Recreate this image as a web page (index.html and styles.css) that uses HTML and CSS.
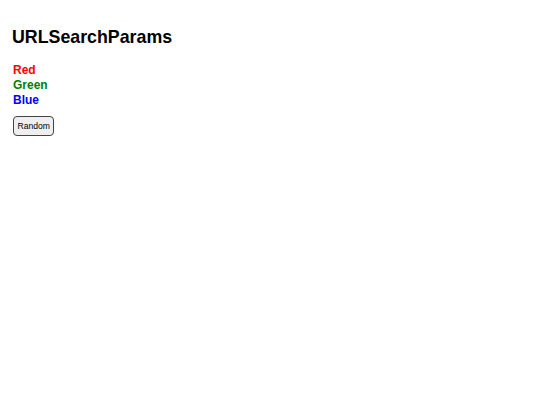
FILE: index.html
```html
<!DOCTYPE html>
<html>
<head>
<link rel="stylesheet" href="styles.css">
</head>
<body>
<div class="app">
  <h2 class="title">URLSearchParams</h2>
  <div class="colors">
    <div class="color red">Red</div>
    <div class="color green">Green</div>
    <div class="color blue">Blue</div>
  </div>
  <button class="btn">Random</button>
</div>
</body>
</html>
```
FILE: styles.css
```css
body {
  margin: 0;
  font-family: "Liberation Sans", Arial, sans-serif;
  background: #fff;
}
.app {
  padding: 12px 12px;
  display: flex;
  flex-direction: column;
  align-items: flex-start;
}
.title {
  font-size: 17.8px;
  font-weight: bold;
  margin: 15px 0 15px 0;
  color: #000;
}
.colors {
  display: flex;
  flex-direction: column;
  margin-left: 1px;
}
.color {
  font-size: 12px;
  font-weight: bold;
  line-height: 15px;
}
.red { color: #ff0000; }
.green { color: #008000; }
.blue { color: #0000ff; }
.btn {
  margin: 8px 0 0 1px;
  font-family: "Liberation Sans", Arial, sans-serif;
  font-size: 8.6px;
  line-height: 10px;
  padding: 4px 3.5px;
  border: 1px solid #444;
  border-radius: 4px;
  background: #efefef;
  color: #000;
}
```
